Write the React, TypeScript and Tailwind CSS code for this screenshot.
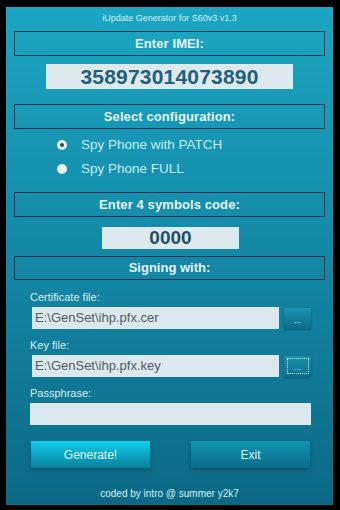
import React from "react";

const font = { fontFamily: '"Liberation Sans", Arial, sans-serif' };

function SectionHeader({ label }: { label: string }) {
    return (
        <div className="mx-[8px] h-[25px] border border-[#103852] flex items-center justify-center">
            <span className="text-[13px] font-bold text-[#e4f6fb] tracking-[0.1px]">{label}</span>
        </div>
    );
}

function Radio({ checked, label }: { checked?: boolean; label: string }) {
    return (
        <div className="h-[24px] flex items-center pl-[51px]">
            <span className="w-[10px] h-[10px] rounded-full bg-[#e9f4f7] flex items-center justify-center">
                {checked && <span className="w-[4px] h-[4px] rounded-full bg-[#1d4e63]" />}
            </span>
            <span className="ml-[14px] text-[13.5px] text-[#c4ecf7]">{label}</span>
        </div>
    );
}

function FileRow({ label, value, focused }: { label: string; value: string; focused?: boolean }) {
    return (
        <div>
            <div className="h-[16px] pl-[24px] flex items-center text-[11px] text-[#d4f0f7]">{label}</div>
            <div className="mt-[2px] flex items-center pl-[26px]">
                <div className="w-[247px] h-[22px] bg-[#dbe9ee] flex items-center pl-[3px] text-[13px] text-[#4d5d63]">
                    {value}
                </div>
                <div className="ml-[5px] w-[27px] h-[21px] bg-gradient-to-b from-[#1795b2] to-[#0d6c88] shadow-[0_1px_2px_rgba(0,40,60,0.4)] flex items-center justify-center">
                    <div className={`w-[22px] h-[16px] flex items-end justify-center pb-[1px] text-[9px] leading-none text-[#d8f3fa] ${focused ? "border border-dotted border-[#cde9f0]" : ""}`}>
                        ...
                    </div>
                </div>
            </div>
        </div>
    );
}

export default function App() {
    return (
        <main className="w-[340px] h-[510px] bg-black pt-[7px] pl-[6px] overflow-hidden" style={font}>
            <div className="w-[327px] h-[498px] bg-gradient-to-b from-[#1ca6c3] via-[#1488a6] to-[#0c6986] flex flex-col">
                <div className="h-[24px] flex items-center justify-center text-[9px] text-[#d0f0f8]">
                    iUpdate Generator for S60v3 v1.3
                </div>

                <SectionHeader label="Enter IMEI:" />

                <div className="mt-[8px] mx-auto w-[247px] h-[25px] bg-[#dde9ed] flex items-center justify-center">
                    <span className="text-[21px] font-bold text-[#22607a] tracking-[0.2px]">358973014073890</span>
                </div>

                <div className="mt-[15px]">
                    <SectionHeader label="Select configuration:" />
                </div>

                <div className="mt-[4px]">
                    <Radio checked label="Spy Phone with PATCH" />
                    <Radio label="Spy Phone FULL" />
                </div>

                <div className="mt-[11px]">
                    <SectionHeader label="Enter 4 symbols code:" />
                </div>

                <div className="mt-[10px] mx-auto w-[137px] h-[22px] bg-[#dde9ed] flex items-center justify-center translate-x-[1px]">
                    <span className="text-[19px] font-bold text-[#1d4f66]">0000</span>
                </div>

                <div className="mt-[7px]">
                    <div className="mx-[8px] h-[24px] border border-[#103852] flex items-center justify-center">
                        <span className="text-[13px] font-bold text-[#e4f6fb]">Signing with:</span>
                    </div>
                </div>

                <div className="mt-[9px] flex flex-col gap-[8px]">
                    <FileRow label="Certificate file:" value="E:\GenSet\ihp.pfx.cer" />
                    <FileRow label="Key file:" value="E:\GenSet\ihp.pfx.key" focused />
                </div>

                <div className="mt-[8px]">
                    <div className="h-[16px] pl-[24px] flex items-center text-[11px] text-[#d4f0f7]">Passphrase:</div>
                    <div className="mt-[2px] ml-[24px] w-[281px] h-[22px] bg-[#dbe9ee]" />
                </div>

                <div className="mt-[16px] flex pl-[25px] gap-[41px]">
                    <button className="w-[119px] h-[27px] bg-gradient-to-b from-[#0fd0ec] to-[#0a7f9b] shadow-[0_2px_4px_rgba(0,40,60,0.35)] text-[12px] text-[#dff8fd]">
                        Generate!
                    </button>
                    <button className="w-[119px] h-[27px] bg-gradient-to-b from-[#1194b1] to-[#0b6c88] shadow-[0_2px_4px_rgba(0,40,60,0.35)] text-[12px] text-[#dff8fd]">
                        Exit
                    </button>
                </div>

                <div className="mt-[18px] text-center text-[10px] text-[#d2f0f8]">coded by intro @ summer y2k7</div>
            </div>
        </main>
    );
}
